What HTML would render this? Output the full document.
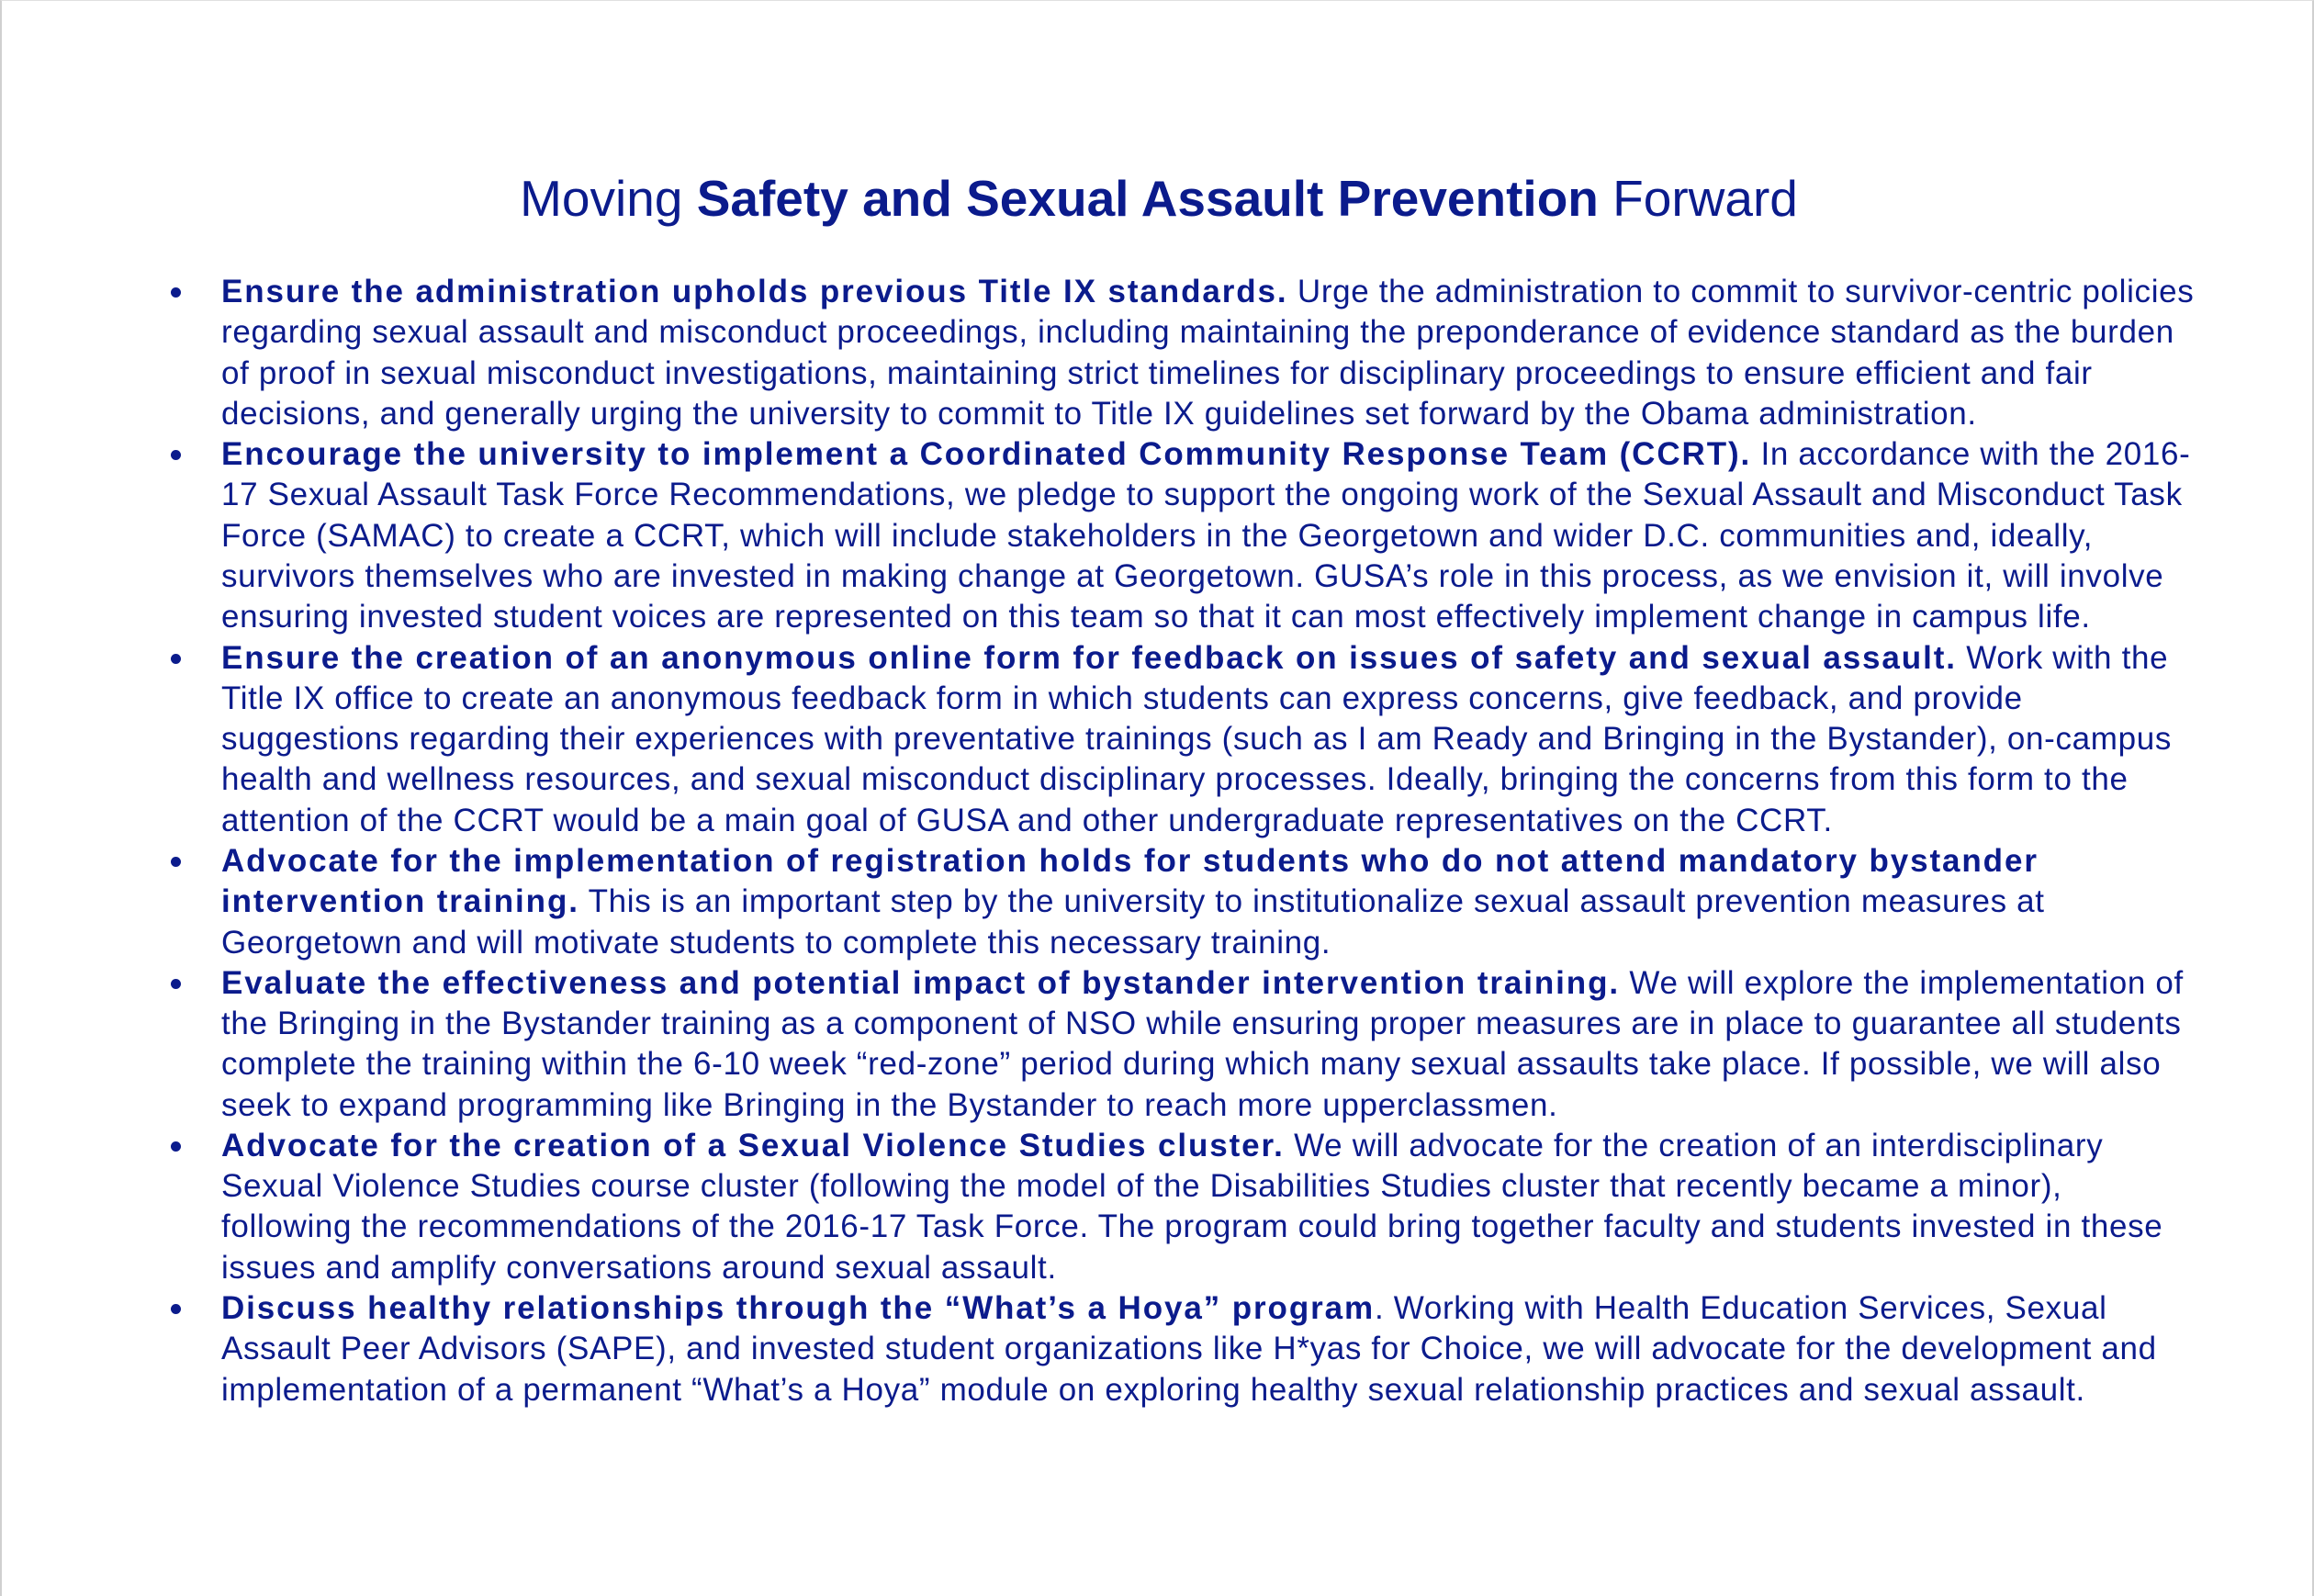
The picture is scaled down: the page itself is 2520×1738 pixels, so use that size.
<!DOCTYPE html>
<html><head><meta charset="utf-8"><style>
html,body{margin:0;padding:0;background:#fff;}
body{width:2520px;height:1738px;position:relative;overflow:hidden;box-sizing:border-box;border-left:2px solid #d0d0d0;border-right:2px solid #d0d0d0;border-top:1px solid #e0e0e0;}
.t{position:absolute;top:183px;left:0;width:2520px;text-align:center;font-family:"Liberation Sans",sans-serif;font-size:55px;color:#0b1b8c;white-space:nowrap;}
.b{position:absolute;top:295px;left:239px;font-family:"Liberation Sans",sans-serif;font-size:35px;line-height:44.28px;color:#0b1b8c;letter-spacing:0.66px;}
.b b{letter-spacing:1.9px;}
.l{white-space:nowrap;position:relative;}
.d::before{content:"";position:absolute;left:-55px;top:17px;width:11px;height:11px;border-radius:50%;background:#0b1b8c;}
</style></head><body>
<div class="t">Moving <b>Safety and Sexual Assault Prevention</b> Forward</div>
<div class="b">
<div class="l d"><b>Ensure the administration upholds previous Title IX standards.</b> Urge the administration to commit to survivor-centric policies</div>
<div class="l">regarding sexual assault and misconduct proceedings, including maintaining the preponderance of evidence standard as the burden</div>
<div class="l">of proof in sexual misconduct investigations, maintaining strict timelines for disciplinary proceedings to ensure efficient and fair</div>
<div class="l">decisions, and generally urging the university to commit to Title IX guidelines set forward by the Obama administration.</div>
<div class="l d"><b>Encourage the university to implement a Coordinated Community Response Team (CCRT).</b> In accordance with the 2016-</div>
<div class="l">17 Sexual Assault Task Force Recommendations, we pledge to support the ongoing work of the Sexual Assault and Misconduct Task</div>
<div class="l">Force (SAMAC) to create a CCRT, which will include stakeholders in the Georgetown and wider D.C. communities and, ideally,</div>
<div class="l">survivors themselves who are invested in making change at Georgetown. GUSA’s role in this process, as we envision it, will involve</div>
<div class="l">ensuring invested student voices are represented on this team so that it can most effectively implement change in campus life.</div>
<div class="l d"><b>Ensure the creation of an anonymous online form for feedback on issues of safety and sexual assault.</b> Work with the</div>
<div class="l">Title IX office to create an anonymous feedback form in which students can express concerns, give feedback, and provide</div>
<div class="l">suggestions regarding their experiences with preventative trainings (such as I am Ready and Bringing in the Bystander), on-campus</div>
<div class="l">health and wellness resources, and sexual misconduct disciplinary processes. Ideally, bringing the concerns from this form to the</div>
<div class="l">attention of the CCRT would be a main goal of GUSA and other undergraduate representatives on the CCRT.</div>
<div class="l d"><b>Advocate for the implementation of registration holds for students who do not attend mandatory bystander</b></div>
<div class="l"><b>intervention training.</b> This is an important step by the university to institutionalize sexual assault prevention measures at</div>
<div class="l">Georgetown and will motivate students to complete this necessary training.</div>
<div class="l d"><b>Evaluate the effectiveness and potential impact of bystander intervention training.</b> We will explore the implementation of</div>
<div class="l">the Bringing in the Bystander training as a component of NSO while ensuring proper measures are in place to guarantee all students</div>
<div class="l">complete the training within the 6-10 week “red-zone” period during which many sexual assaults take place. If possible, we will also</div>
<div class="l">seek to expand programming like Bringing in the Bystander to reach more upperclassmen.</div>
<div class="l d"><b>Advocate for the creation of a Sexual Violence Studies cluster.</b> We will advocate for the creation of an interdisciplinary</div>
<div class="l">Sexual Violence Studies course cluster (following the model of the Disabilities Studies cluster that recently became a minor),</div>
<div class="l">following the recommendations of the 2016-17 Task Force. The program could bring together faculty and students invested in these</div>
<div class="l">issues and amplify conversations around sexual assault.</div>
<div class="l d"><b>Discuss healthy relationships through the “What’s a Hoya” program</b>. Working with Health Education Services, Sexual</div>
<div class="l">Assault Peer Advisors (SAPE), and invested student organizations like H*yas for Choice, we will advocate for the development and</div>
<div class="l">implementation of a permanent “What’s a Hoya” module on exploring healthy sexual relationship practices and sexual assault.</div>
</div>
</body></html>
